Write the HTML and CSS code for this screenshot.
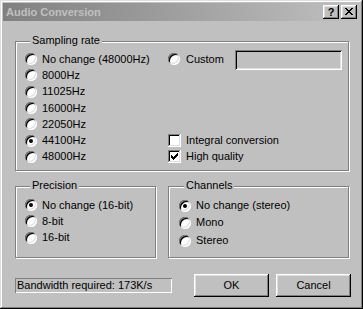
FILE: index.html
```html
<!DOCTYPE html>
<html lang="en">
<head>
<meta charset="UTF-8" />
<title>Audio Conversion</title>
<link rel="stylesheet" href="styles.css">
</head>
<body>
  <div class="window" role="dialog" aria-label="Audio Conversion">
    <div class="titlebar">
      <span class="title">Audio Conversion</span>
      <div class="caption-buttons">
        <button class="cap-btn help" aria-label="Help">?</button>
        <button class="cap-btn close" aria-label="Close">
          <svg width="8" height="7" viewBox="0 0 8 7" shape-rendering="crispEdges">
            <rect x="0" y="0" width="2" height="1"/><rect x="6" y="0" width="2" height="1"/>
            <rect x="1" y="1" width="2" height="1"/><rect x="5" y="1" width="2" height="1"/>
            <rect x="2" y="2" width="4" height="1"/>
            <rect x="3" y="3" width="2" height="1"/>
            <rect x="2" y="4" width="4" height="1"/>
            <rect x="1" y="5" width="2" height="1"/><rect x="5" y="5" width="2" height="1"/>
            <rect x="0" y="6" width="2" height="1"/><rect x="6" y="6" width="2" height="1"/>
          </svg>
        </button>
      </div>
    </div>

    <div class="dialog-body">
      <div class="group sampling">
        <div class="legend">Sampling rate</div>
        <div class="rate-grid">
          <div class="opt left"><span class="radio"></span>No change (48000Hz)</div>
          <div class="opt left"><span class="radio"></span>8000Hz</div>
          <div class="opt left"><span class="radio"></span>11025Hz</div>
          <div class="opt left"><span class="radio"></span>16000Hz</div>
          <div class="opt left"><span class="radio"></span>22050Hz</div>
          <div class="opt left"><span class="radio on"></span>44100Hz</div>
          <div class="opt left"><span class="radio"></span>48000Hz</div>
          <div class="opt custom"><span class="radio"></span><span class="custom-label">Custom</span><span class="edit"></span></div>
          <div class="opt integral"><span class="check"></span>Integral conversion</div>
          <div class="opt hq">
            <span class="check">
              <svg width="7" height="7" viewBox="0 0 7 7" shape-rendering="crispEdges">
                <rect x="6" y="0" width="1" height="1"/>
                <rect x="5" y="1" width="2" height="1"/>
                <rect x="0" y="2" width="1" height="1"/><rect x="4" y="2" width="3" height="1"/>
                <rect x="0" y="3" width="2" height="1"/><rect x="3" y="3" width="3" height="1"/>
                <rect x="0" y="4" width="5" height="1"/>
                <rect x="1" y="5" width="3" height="1"/>
                <rect x="2" y="6" width="1" height="1"/>
              </svg>
            </span>High quality
          </div>
        </div>
      </div>

      <div class="group-row">
        <div class="group precision">
          <div class="legend">Precision</div>
          <div class="opt-list">
            <div class="opt"><span class="radio on"></span>No change (16-bit)</div>
            <div class="opt"><span class="radio"></span>8-bit</div>
            <div class="opt"><span class="radio"></span>16-bit</div>
          </div>
        </div>
        <div class="group channels">
          <div class="legend">Channels</div>
          <div class="opt-list">
            <div class="opt"><span class="radio on"></span>No change (stereo)</div>
            <div class="opt"><span class="radio"></span>Mono</div>
            <div class="opt"><span class="radio"></span>Stereo</div>
          </div>
        </div>
      </div>

      <div class="footer">
        <div class="status">Bandwidth required: 173K/s</div>
        <div class="actions">
          <button class="btn">OK</button>
          <button class="btn">Cancel</button>
        </div>
      </div>
    </div>
  </div>
</body>
</html>
```

FILE: styles.css
```css
:root {
  --face: #c0c0c0;
  --shadow: #808080;
  --dark: #000000;
  --light: #dfdfdf;
  --hilite: #ffffff;
  --font: 11px "Liberation Sans", Arial, sans-serif;
}
* {
  box-sizing: border-box;
}
html, body {
  margin: 0;
  padding: 0;
  background: var(--face);
}
.window {
  width: 363px;
  height: 309px;
  padding: 3px;
  background: var(--face);
  font: var(--font);
  color: #000;
  box-shadow:
    inset -1px -1px var(--dark),
    inset 1px 1px var(--light),
    inset -2px -2px var(--shadow),
    inset 2px 2px var(--hilite);
}
/* title bar */
.titlebar {
  height: 18px;
  display: flex;
  align-items: center;
  justify-content: space-between;
  padding: 0 3px 0 3px;
  background: linear-gradient(to right, #808080, #c0c0c0);
}
.title {
  font-weight: bold;
  color: #c0c0c0;
  line-height: 13px;
}
.caption-buttons {
  display: flex;
  gap: 2px;
}
.cap-btn {
  width: 16px;
  height: 14px;
  padding: 0;
  border: 0;
  background: var(--face);
  font: bold 11px "Liberation Sans", Arial, sans-serif;
  line-height: 14px;
  color: #000;
  display: grid;
  place-items: center;
  box-shadow:
    inset -1px -1px var(--dark),
    inset 1px 1px var(--hilite),
    inset -2px -2px var(--shadow),
    inset 2px 2px var(--light);
}
.cap-btn svg {
  fill: #000;
  margin: 0 0 1px 0;
}
/* body */
.dialog-body {
  padding: 20px 11px 0 12px;
}
.group {
  border: 1px solid var(--shadow);
  box-shadow: inset 1px 1px var(--hilite), 1px 1px var(--hilite);
}
.legend {
  display: table;
  margin: -8px 0 0 5px;
  padding: 0 2px;
  line-height: 13px;
  background: var(--face);
}
.sampling {
  height: 130px;
  padding: 0 6px 0 9px;
}
.rate-grid {
  display: grid;
  grid-template-columns: 143px 1fr;
  grid-auto-rows: 16.3px;
  padding-top: 4px;
}
.opt {
  display: flex;
  align-items: center;
  gap: 5px;
  line-height: 13px;
  white-space: nowrap;
}
.opt.left { grid-column: 1; }
.opt.custom { grid-column: 2; grid-row: 1; }
.opt.integral { grid-column: 2; grid-row: 6; }
.opt.hq { grid-column: 2; grid-row: 7; }
.custom-label {
  margin-left: 1px;
}
.edit {
  width: 107px;
  height: 20px;
  margin: 2px 0 0 auto;
  background: var(--face);
  box-shadow:
    inset 1px 1px var(--shadow),
    inset -1px -1px var(--hilite),
    inset 2px 2px var(--dark),
    inset -2px -2px var(--light);
}
/* radio + checkbox */
.radio {
  flex: none;
  width: 12px;
  height: 12px;
  border-radius: 50%;
  background: #fff;
  display: grid;
  place-items: center;
  box-shadow:
    inset -1px -1px var(--hilite),
    inset 1px 1px var(--shadow),
    inset -2px -2px var(--light),
    inset 2px 2px var(--dark);
}
.radio.on::after {
  content: "";
  width: 4px;
  height: 4px;
  border-radius: 50%;
  background: #000;
}
.check {
  flex: none;
  width: 13px;
  height: 13px;
  background: #fff;
  display: grid;
  place-items: center;
  box-shadow:
    inset -1px -1px var(--hilite),
    inset 1px 1px var(--shadow),
    inset -2px -2px var(--light),
    inset 2px 2px var(--dark);
}
.check svg {
  fill: #000;
}
/* lower groups */
.group-row {
  display: flex;
  gap: 12px;
  margin-top: 15px;
}
.precision {
  width: 141px;
  height: 72px;
  padding-left: 9px;
}
.channels {
  flex: 1;
  height: 72px;
  padding-left: 10px;
}
.precision .opt-list {
  display: grid;
  grid-auto-rows: 16.3px;
  padding-top: 5px;
}
.channels .opt-list {
  display: grid;
  grid-template-rows: 17px 17px 19px;
  padding-top: 5px;
}
/* footer */
.footer {
  display: flex;
  align-items: center;
  margin-top: 16px;
}
.status {
  width: 157px;
  height: 15px;
  padding: 1px 0 0 2px;
  line-height: 13px;
  white-space: nowrap;
  box-shadow: inset 1px 1px var(--shadow), inset -1px -1px var(--hilite);
}
.actions {
  display: flex;
  gap: 7px;
  margin: 0 -2px 0 auto;
}
.btn {
  width: 75px;
  height: 23px;
  padding: 0 0 2px 0;
  border: 0;
  background: var(--face);
  font: var(--font);
  color: #000;
  box-shadow:
    inset -1px -1px var(--dark),
    inset 1px 1px var(--hilite),
    inset -2px -2px var(--shadow),
    inset 2px 2px var(--light);
}
```
